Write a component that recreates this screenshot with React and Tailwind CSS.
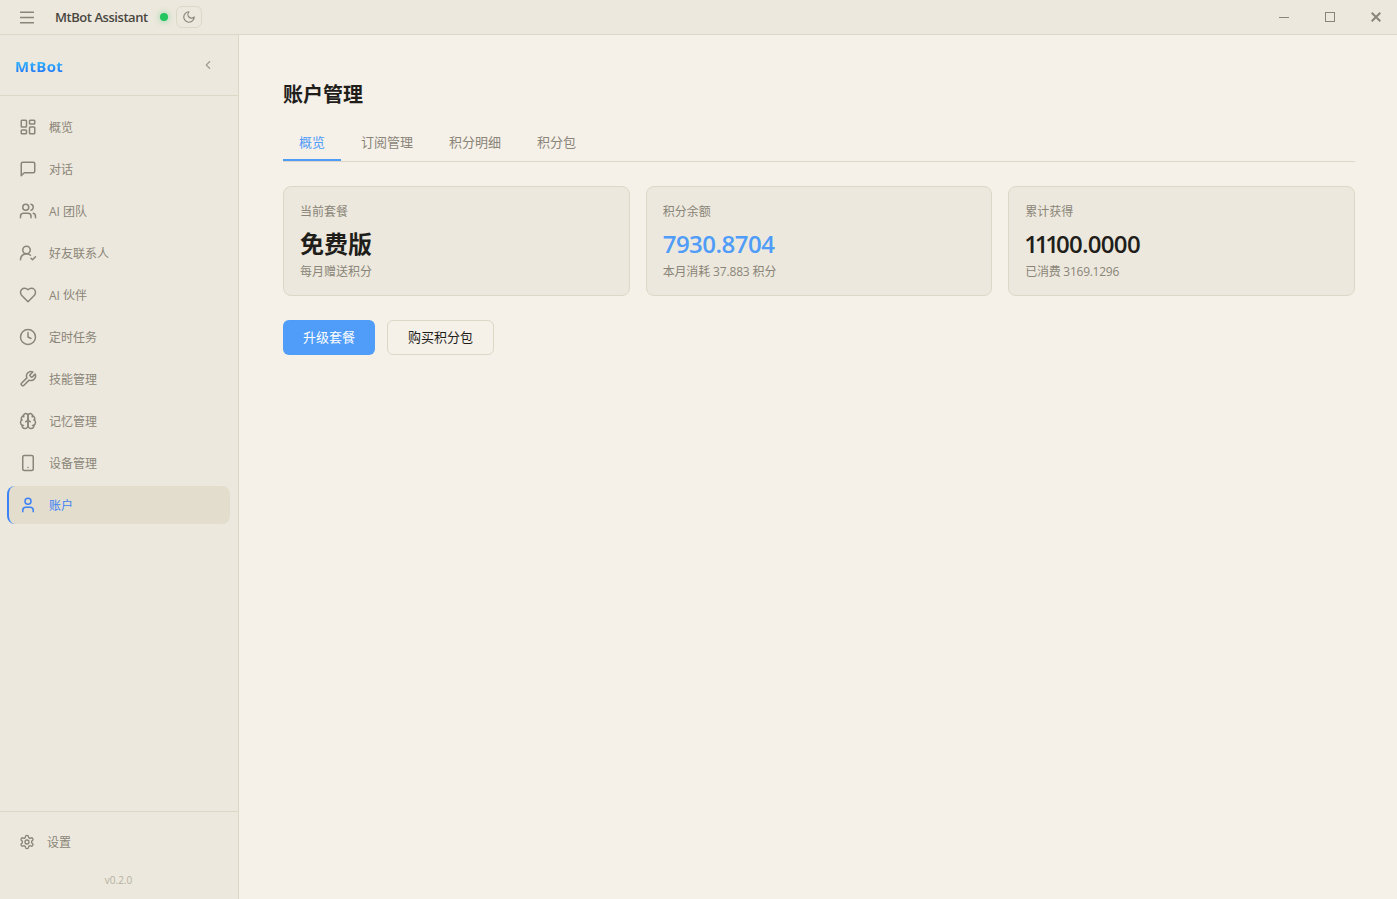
import { useState } from "react";
import { LayoutDashboard, Users, UserRoundCheck, Clock, Smartphone, User, ChevronLeft } from "lucide-react";
import clsx from "clsx";

// Small factory for the outline icons drawn on a 24 grid
const outline = (...paths) => function OutlineIcon({ size = 18 }) {
    return (
        <svg width={size} height={size} viewBox="0 0 24 24" fill="none" stroke="currentColor" strokeWidth="2" strokeLinecap="round" strokeLinejoin="round">
            {paths.map((d) => <path key={d} d={d} />)}
        </svg>
    );
};

const Chat = outline("M21 15a2 2 0 0 1-2 2H7l-4 4V5a2 2 0 0 1 2-2h14a2 2 0 0 1 2 2z");
const Heart = outline("M19 14c1.49-1.46 3-3.21 3-5.5A5.5 5.5 0 0 0 16.5 3c-1.76 0-3 .5-4.5 2-1.5-1.5-2.74-2-4.5-2A5.5 5.5 0 0 0 2 8.5c0 2.3 1.5 4.05 3 5.5l7 7Z");
const Wrench = outline("M14.7 6.3a1 1 0 0 0 0 1.4l1.6 1.6a1 1 0 0 0 1.4 0l3.77-3.77a6 6 0 0 1-7.94 7.94l-6.91 6.91a2.12 2.12 0 0 1-3-3l6.91-6.91a6 6 0 0 1 7.94-7.94l-3.76 3.76z");
const Moon = outline("M12 3a6 6 0 0 0 9 9 9 9 0 1 1-9-9Z");
const Brain = outline(
    "M12 5a3 3 0 1 0-5.997.125 4 4 0 0 0-2.526 5.77 4 4 0 0 0 .556 6.588A4 4 0 1 0 12 18Z",
    "M12 5a3 3 0 1 1 5.997.125 4 4 0 0 1 2.526 5.77 4 4 0 0 1-.556 6.588A4 4 0 1 1 12 18Z",
    "M15 13a4.5 4.5 0 0 1-3-4 4.5 4.5 0 0 1-3 4",
    "M17.599 6.5a3 3 0 0 0 .399-1.375",
    "M6.003 5.125A3 3 0 0 0 6.401 6.5",
    "M3.477 10.896a4 4 0 0 1 .585-.396",
    "M19.938 10.5a4 4 0 0 1 .585.396",
    "M6 18a4 4 0 0 1-1.967-.516",
    "M19.967 17.484A4 4 0 0 1 18 18"
);
const Gear = outline(
    "M12.22 2h-.44a2 2 0 0 0-2 2v.18a2 2 0 0 1-1 1.73l-.43.25a2 2 0 0 1-2 0l-.15-.08a2 2 0 0 0-2.73.73l-.22.38a2 2 0 0 0 .73 2.73l.15.1a2 2 0 0 1 1 1.72v.51a2 2 0 0 1-1 1.74l-.15.09a2 2 0 0 0-.73 2.73l.22.38a2 2 0 0 0 2.73.73l.15-.08a2 2 0 0 1 2 0l.43.25a2 2 0 0 1 1 1.73V20a2 2 0 0 0 2 2h.44a2 2 0 0 0 2-2v-.18a2 2 0 0 1 1-1.73l.43-.25a2 2 0 0 1 2 0l.15.08a2 2 0 0 0 2.73-.73l.22-.39a2 2 0 0 0-.73-2.73l-.15-.08a2 2 0 0 1-1-1.74v-.5a2 2 0 0 1 1-1.74l.15-.09a2 2 0 0 0 .73-2.73l-.22-.38a2 2 0 0 0-2.73-.73l-.15.08a2 2 0 0 1-2 0l-.43-.25a2 2 0 0 1-1-1.73V4a2 2 0 0 0-2-2z",
    "M15 12a3 3 0 1 1-6 0 3 3 0 0 1 6 0z"
);

const NAV_ITEMS = [
    { id: "overview", label: "概览", icon: LayoutDashboard },
    { id: "chat", label: "对话", icon: Chat },
    { id: "team", label: "AI 团队", icon: Users },
    { id: "contacts", label: "好友联系人", icon: UserRoundCheck },
    { id: "partner", label: "AI 伙伴", icon: Heart },
    { id: "schedule", label: "定时任务", icon: Clock },
    { id: "skills", label: "技能管理", icon: Wrench },
    { id: "memory", label: "记忆管理", icon: Brain },
    { id: "devices", label: "设备管理", icon: Smartphone },
    { id: "account", label: "账户", icon: User },
];

const TABS = ["概览", "订阅管理", "积分明细", "积分包"];

const earned = <><span className="tracking-[-3.2px]">111</span>00.0000</>;

const STATS = [
    { label: "当前套餐", value: "免费版", note: "每月赠送积分", valueClass: "font-bold text-[#1f1e1b]", noteClass: "" },
    { label: "积分余额", value: "7930.8704", note: "本月消耗 37.883 积分", valueClass: "font-semibold text-[#4f9cf9] tracking-[-0.5px]", noteClass: "tracking-[-0.15px]" },
    { label: "累计获得", value: earned, note: "已消费 3169.1296", valueClass: "font-semibold text-[#1f1e1b] tracking-[-0.7px] -ml-px", noteClass: "tracking-[-0.27px]" },
];

function TitleBar() {
    return (
        <header className="h-[35px] shrink-0 flex items-center justify-between bg-[#ece8dd] border-b border-[#ddd8c6]">
            <div className="flex items-center">
                <button className="ml-5 w-3.5 text-[#8a8578]" aria-label="菜单">
                    <svg width="14" height="13" viewBox="0 0 14 13" fill="none" stroke="currentColor" strokeWidth="1.5"><path d="M0 1.25h14M0 6.5h14M0 11.75h14" /></svg>
                </button>
                <span className="ml-[21px] w-[105px] pt-px text-[13px] font-semibold tracking-[-0.45px] whitespace-nowrap text-[#4a473f]">MtBot Assistant</span>
                <span className="w-2 h-2 rounded-full bg-[#22c55e] shadow-[0_0_6px_rgba(34,197,94,0.5)]" />
                <button className="ml-2 w-[26px] h-[22px] flex items-center justify-center rounded-md border border-[#ddd8c6] text-[#8a8578]">
                    <Moon size={14} />
                </button>
            </div>
            <div className="flex h-full text-[#8a8578]">
                <button className="w-[46px] flex items-center justify-center" aria-label="最小化">
                    <svg width="10" height="10" viewBox="0 0 10 10"><rect y="5" width="10" height="1" fill="currentColor" /></svg>
                </button>
                <button className="w-[46px] flex items-center justify-center" aria-label="最大化">
                    <svg width="10" height="10" viewBox="0 0 10 10"><rect x="0.5" y="0.5" width="9" height="9" fill="none" stroke="currentColor" /></svg>
                </button>
                <button className="w-11 flex items-center justify-center pl-0.5" aria-label="关闭">
                    <svg width="10" height="10" viewBox="0 0 10 10"><path d="M.7.7l8.6 8.6M9.3.7L.7 9.3" stroke="currentColor" strokeWidth="2" /></svg>
                </button>
            </div>
        </header>
    );
}

function Sidebar({ active, onSelect }) {
    return (
        <aside className="w-[239px] shrink-0 flex flex-col bg-[#ece8dd] border-r border-[#ddd8c6]">
            <div className="h-[61px] flex items-center justify-between pl-[15px] pr-[23px] border-b border-[#ddd8c6]">
                <span className="mt-px text-[15px] leading-5 font-bold tracking-[0.3px] bg-linear-to-b from-[#4bd5fb] to-[#2563f6] bg-clip-text text-transparent">MtBot</span>
                <ChevronLeft size={14} className="text-[#a19c8f]" />
            </div>

            <nav className="flex-1 flex flex-col gap-1 pl-[7px] pr-2 pt-3">
                {NAV_ITEMS.map(({ id, label, icon: Icon }) => (
                    <button
                        key={id}
                        onClick={() => onSelect(id)}
                        className={clsx(
                            "h-[38px] flex items-center gap-3 pl-2.5 rounded-lg border-l-2 text-xs",
                            active === id ? "bg-[#e3ddcd] border-[#3b82f6] text-[#3b82f6]" : "border-transparent text-[#8a8578]"
                        )}
                    >
                        <Icon size={18} />
                        <span className="pt-0.5">{label}</span>
                    </button>
                ))}
            </nav>

            <div className="h-[88px] border-t border-[#ddd8c6] flex flex-col text-[#8a8578]">
                <button className="mt-[11px] h-[38px] flex items-center gap-3 pl-[19px] text-xs">
                    <Gear size={16} />
                    <span className="pt-0.5">设置</span>
                </button>
                <div className="mt-[11px] pr-px text-center text-[10px] leading-4 text-[#b5b0a2]">v0.2.0</div>
            </div>
        </aside>
    );
}

function StatCard({ label, value, note, valueClass, noteClass }) {
    return (
        <div className="h-[110px] rounded-lg border border-[#ddd8c6] bg-[#ece8dd] px-4 pt-4 text-xs text-[#8a8578]">
            <div className="leading-[18px]">{label}</div>
            <div className={clsx("mt-[5px] mb-px h-9 text-2xl leading-9", valueClass)}>{value}</div>
            <div className={clsx("leading-[18px]", noteClass)}>{note}</div>
        </div>
    );
}

export default function App() {
    const [page, setPage] = useState("account");
    const [tab, setTab] = useState("概览");

    return (
        <div className="h-screen flex flex-col overflow-hidden bg-[#f5f0e8] font-['Open_Sans','Noto_Sans_CJK_SC',sans-serif]">
            <TitleBar />
            <div className="flex-1 min-h-0 flex">
                <Sidebar active={page} onSelect={setPage} />

                <main className="flex-1 pl-11 pr-[42px] pt-[45px]">
                    <h1 className="text-xl leading-[30px] font-bold text-[#1f1e1b]">账户管理</h1>

                    <div className="mt-[15px] h-[37px] flex gap-1 border-b border-[#ddd8c6] text-[13px]">
                        {TABS.map((t) => (
                            <button
                                key={t}
                                onClick={() => setTab(t)}
                                className={clsx(
                                    "h-9 px-4 pt-0.5 border-b-2",
                                    tab === t ? "border-[#4f9cf9] text-[#4f9cf9]" : "border-transparent text-[#8a8578]"
                                )}
                            >
                                {t}
                            </button>
                        ))}
                    </div>

                    <div className="mt-6 grid grid-cols-3 gap-4">
                        {STATS.map((s) => <StatCard key={s.label} {...s} />)}
                    </div>

                    <div className="mt-6 flex gap-3 text-[13px]">
                        <button className="w-[92px] h-[35px] rounded-md bg-[#4f9cf9] text-white">升级套餐</button>
                        <button className="w-[107px] h-[35px] rounded-md border border-[#ddd8c6] text-[#1f1e1b]">购买积分包</button>
                    </div>
                </main>
            </div>
        </div>
    );
}
